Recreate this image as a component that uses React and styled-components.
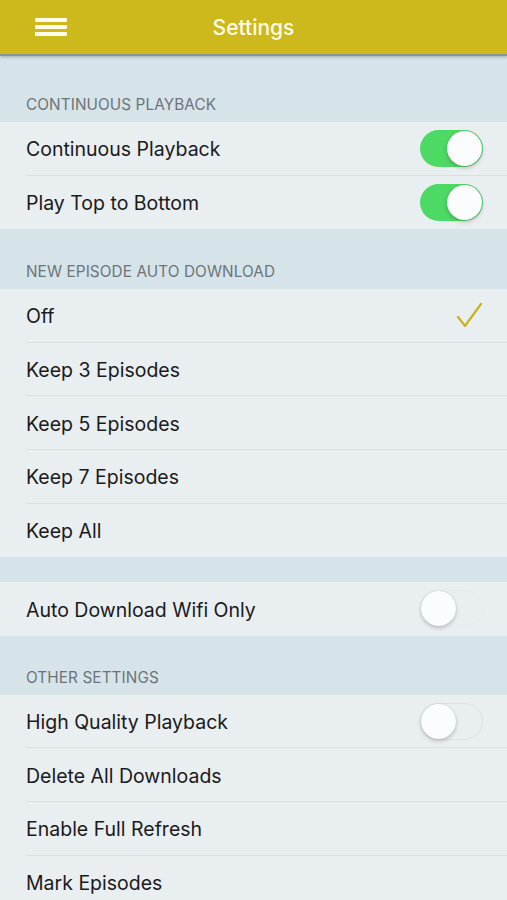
import styled, { createGlobalStyle } from "styled-components"

const GlobalStyle = createGlobalStyle`
  html, body {
    margin: 0;
    padding: 0;
    background: #d6e3e8;
    font-family: Inter, "Liberation Sans", Arial, sans-serif;
  }
`

const sections = [
  {
    title: "Continuous Playback",
    height: 66,
    rows: [
      { label: "Continuous Playback", toggle: true },
      { label: "Play Top to Bottom", toggle: true },
    ],
  },
  {
    title: "New Episode Auto Download",
    height: 60,
    rows: [
      { label: "Off", checked: true },
      { label: "Keep 3 Episodes" },
      { label: "Keep 5 Episodes" },
      { label: "Keep 7 Episodes" },
      { label: "Keep All" },
    ],
  },
  {
    spacer: true,
    height: 25,
    rows: [{ label: "Auto Download Wifi Only", toggle: false, faint: true }],
  },
  {
    title: "Other Settings",
    height: 59,
    rows: [
      { label: "High Quality Playback", toggle: false },
      { label: "Delete All Downloads" },
      { label: "Enable Full Refresh" },
      { label: "Mark Episodes" },
    ],
  },
]

const App = () => {
  return (
    <Page>
      <GlobalStyle />
      <Header>
        <Burger>
          <span />
          <span />
          <span />
        </Burger>
        <Title>Settings</Title>
      </Header>
      <List>
        {sections.map((section, i) => (
          <div key={i}>
            <SectionHeader $h={section.height}>{section.title}</SectionHeader>
            <Group>
              {section.rows.map((row, j) => (
                <Row key={j}>
                  <Label>{row.label}</Label>
                  {row.toggle !== undefined && (
                    <Toggle $on={row.toggle} $faint={row.faint}>
                      <Knob $on={row.toggle} />
                    </Toggle>
                  )}
                  {row.checked && (
                    <svg width="28" height="28" viewBox="0 0 28 28">
                      <path
                        d="M3 15 L10 24 L26 2"
                        fill="none"
                        stroke="#c9b316"
                        strokeWidth="2.2"
                        strokeLinecap="round"
                        strokeLinejoin="round"
                      />
                    </svg>
                  )}
                </Row>
              ))}
            </Group>
          </div>
        ))}
      </List>
    </Page>
  )
}

export default App

const Page = styled.div`
  width: 507px;
  height: 900px;
  overflow: hidden;
  background: #d6e3e8;
`
const Header = styled.div`
  position: relative;
  height: 54px;
  background: #cdb91c;
  border-bottom: 2px solid #8c9394;
  box-shadow: 0 1px 3px rgba(0, 0, 0, 0.25);
  display: flex;
  align-items: center;
  justify-content: center;
  z-index: 2;
`
const Burger = styled.div`
  position: absolute;
  left: 35px;
  top: 18px;
  width: 32px;
  display: flex;
  flex-direction: column;
  gap: 3px;
  span {
    display: block;
    height: 4px;
    background: #fdfbe9;
    border-radius: 1px;
  }
`
const Title = styled.h1`
  margin: 0;
  color: #fffbe8;
  font-size: 21px;
  font-weight: 500;
`
const List = styled.div`
  display: flex;
  flex-direction: column;
`
const SectionHeader = styled.div`
  height: ${(p) => p.$h}px;
  box-sizing: border-box;
  padding: 0 26px 8px;
  display: flex;
  align-items: flex-end;
  text-transform: uppercase;
  font-size: 15.3px;
  letter-spacing: 0.1px;
  color: #6c7479;
`
const Group = styled.div`
  background: #e9eef1;
`
const Row = styled.div`
  height: 53.6px;
  box-sizing: border-box;
  margin-left: 26px;
  padding-right: 24px;
  padding-top: 2px;
  display: flex;
  align-items: center;
  justify-content: space-between;
  border-bottom: 1px solid #d9e0e3;
  &:last-child {
    border-bottom: none;
  }
`
const Label = styled.span`
  font-size: 19.5px;
  color: #1a1a1a;
`
const Toggle = styled.div`
  width: 63px;
  height: 37px;
  margin-top: -2px;
  border-radius: 19px;
  box-sizing: border-box;
  background: ${(p) => (p.$on ? "#4cd964" : "transparent")};
  border: ${(p) =>
    p.$on ? "none" : p.$faint ? "1px solid #e6ebee" : "1px solid #dbe1e4"};
  position: relative;
`
const Knob = styled.div`
  position: absolute;
  top: ${(p) => (p.$on ? "1px" : "0px")};
  left: ${(p) => (p.$on ? "27px" : "0px")};
  width: 35px;
  height: 35px;
  border-radius: 50%;
  background: #fbfcfd;
  box-shadow: 0 2px 4px rgba(0, 0, 0, 0.2), 0 0 1px rgba(0, 0, 0, 0.15);
`
